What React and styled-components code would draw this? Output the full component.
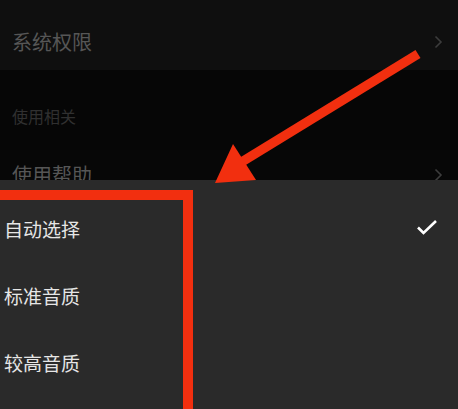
import React from "react";
import styled, { createGlobalStyle } from "styled-components";

const GlobalStyle = createGlobalStyle`
  html, body {
    margin: 0;
    padding: 0;
    background: #070707;
  }
  body {
    font-family: "Noto Sans CJK SC", "Noto Sans", sans-serif;
  }
`;

const Chevron = () => (
  <svg width="9" height="14" viewBox="0 0 9 14">
    <path d="M1.5 1.5 L7 7 L1.5 12.5" fill="none" stroke="#3c3c3c" strokeWidth="1.6" />
  </svg>
);

const Check = () => (
  <svg width="22" height="16" viewBox="0 0 22 16">
    <path d="M2 8.5 L7.5 14 L20 2" fill="none" stroke="#ffffff" strokeWidth="2.6" />
  </svg>
);

const App = () => {
  return (
    <>
      <GlobalStyle />
      <Screen>
        <Settings>
          <Row $bg="#0f0f0f" $height={70} $offset={14}>
            <RowLabel>系统权限</RowLabel>
            <Chevron />
          </Row>
          <SectionHeader>使用相关</SectionHeader>
          <Row $bg="#070707" $height={50} $offset={0}>
            <RowLabel>使用帮助</RowLabel>
            <Chevron />
          </Row>
        </Settings>
        <Sheet>
          <Option>
            <OptionLabel>自动选择</OptionLabel>
            <Check />
          </Option>
          <Option>
            <OptionLabel>标准音质</OptionLabel>
          </Option>
          <Option>
            <OptionLabel>较高音质</OptionLabel>
          </Option>
        </Sheet>
        <Highlight />
        <Arrow width="458" height="409" viewBox="0 0 458 409">
          <line x1="418" y1="54" x2="240" y2="163" stroke="#f22f0f" strokeWidth="9.5" />
          <polygon points="215,183 233,144 256,180" fill="#f22f0f" />
        </Arrow>
      </Screen>
    </>
  );
};

export default App;

const Screen = styled.div`
  position: relative;
  width: 458px;
  height: 409px;
  overflow: hidden;
  display: flex;
  flex-direction: column;
  background: #070707;
`;

const Settings = styled.div`
  height: 180px;
  flex-shrink: 0;
  overflow: hidden;
  display: flex;
  flex-direction: column;
`;

const Row = styled.div`
  height: ${(p) => p.$height}px;
  box-sizing: border-box;
  flex-shrink: 0;
  background: ${(p) => p.$bg};
  display: flex;
  align-items: center;
  justify-content: space-between;
  padding: ${(p) => p.$offset}px 15px 0 12px;
`;

const RowLabel = styled.span`
  font-size: 20px;
  color: #565656;
  line-height: 1;
`;

const SectionHeader = styled.div`
  height: 80px;
  box-sizing: border-box;
  flex-shrink: 0;
  display: flex;
  align-items: center;
  padding: 12px 12px 0;
  font-size: 16px;
  color: #303030;
  background: #060606;
`;

const Sheet = styled.div`
  flex: 1;
  background: #2a2a2a;
  padding-top: 15px;
  display: flex;
  flex-direction: column;
`;

const Option = styled.div`
  height: 67px;
  display: flex;
  align-items: center;
  justify-content: space-between;
  padding: 0 20px 0 4px;

  svg {
    margin-top: -4px;
  }
`;

const OptionLabel = styled.span`
  font-size: 19px;
  color: #e6e6e6;
  line-height: 1;
`;

const Highlight = styled.div`
  position: absolute;
  left: -12px;
  top: 190px;
  width: 205px;
  height: 240px;
  box-sizing: border-box;
  border: 10px solid #f22f0f;
`;

const Arrow = styled.svg`
  position: absolute;
  left: 0;
  top: 0;
  pointer-events: none;
`;
